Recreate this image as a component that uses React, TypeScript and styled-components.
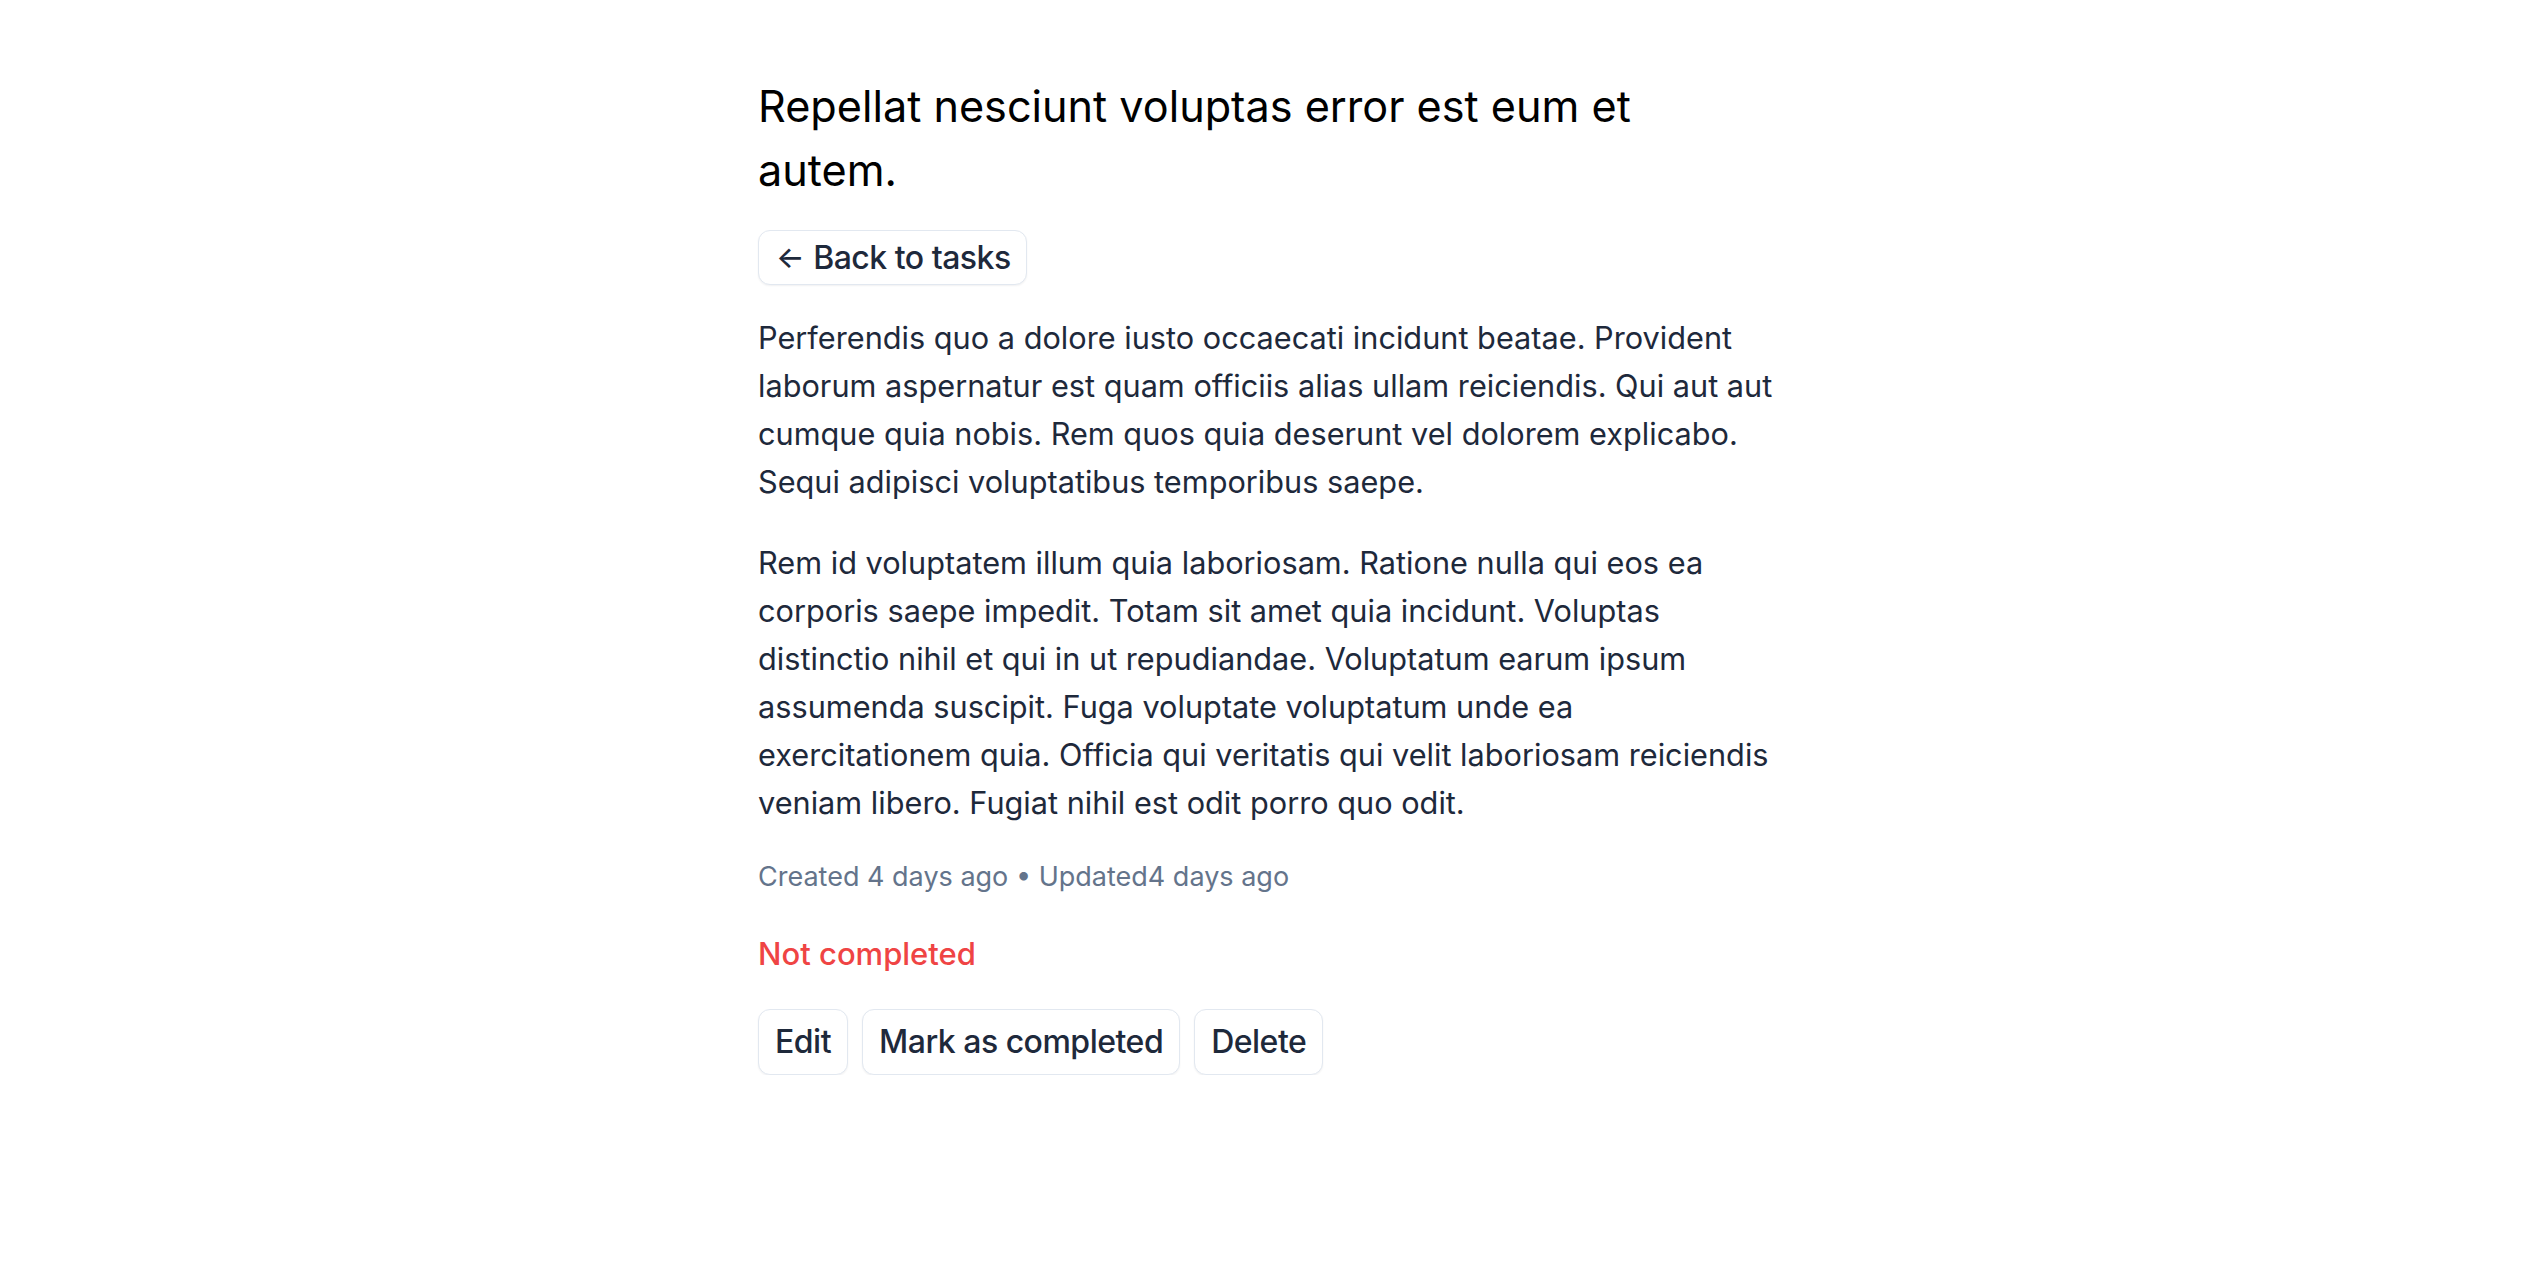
import React from "react";
import styled, { createGlobalStyle } from "styled-components";

const GlobalStyle = createGlobalStyle`
  html, body {
    margin: 0;
    padding: 0;
    background: #ffffff;
  }
  body {
    font-family: Inter, "Noto Sans", "Liberation Sans", sans-serif;
    -webkit-font-smoothing: antialiased;
  }
  * { box-sizing: border-box; }
`;

const Page = styled.main`
  width: 1032px;
  margin: 0 auto;
  padding: 74px 0 0 8px;
  display: flex;
  flex-direction: column;
  align-items: flex-start;
`;

const Title = styled.h1`
  margin: 0;
  font-size: 43.2px;
  line-height: 64px;
  font-weight: 400;
  color: #000000;
`;

const Button = styled.button<{ $compact?: boolean }>`
  display: inline-flex;
  align-items: center;
  gap: ${(p) => (p.$compact ? "9px" : "0")};
  margin: 0;
  padding: ${(p) => (p.$compact ? "3px 15px 3px 17px" : "8px 16px")};
  font-family: inherit;
  font-size: 32px;
  letter-spacing: -0.5px;
  line-height: ${(p) => (p.$compact ? "47px" : "48px")};
  font-weight: 500;
  color: #1e293b;
  background: #ffffff;
  border: 1px solid #e2e8f0;
  border-radius: 12px;
  box-shadow: 0 1px 2px rgba(15, 23, 42, 0.06);
  cursor: pointer;
`;

const BackRow = styled.div`
  margin-top: 28px;
`;

const Arrow = styled.span`
  font-size: 30px;
  font-weight: 500;
`;

const Body = styled.div`
  margin-top: 29px;
  display: flex;
  flex-direction: column;
  gap: 33px;
  width: 100%;
`;

const Paragraph = styled.p`
  margin: 0;
  font-size: 30.7px;
  line-height: 48px;
  color: #1e293b;
`;

const Meta = styled.p`
  margin: 30px 0 0;
  font-size: 27px;
  line-height: 40px;
  color: #64748b;
`;

const Status = styled.p<{ $done?: boolean }>`
  margin: 33px 0 0;
  font-size: 31px;
  line-height: 48px;
  font-weight: 500;
  color: ${(p) => (p.$done ? "#16a34a" : "#ef4444")};
`;

const Actions = styled.div`
  margin-top: 31px;
  display: flex;
  gap: 14px;
`;

export default function App() {
  return (
    <>
      <GlobalStyle />
      <Page>
        <Title>
          Repellat nesciunt voluptas error est eum et
          <br />
          autem.
        </Title>
        <BackRow>
          <Button $compact>
            <Arrow>←</Arrow>
            Back to tasks
          </Button>
        </BackRow>
        <Body>
          <Paragraph>
            Perferendis quo a dolore iusto occaecati incidunt beatae. Provident
            laborum aspernatur est quam officiis alias ullam reiciendis. Qui aut
            aut cumque quia nobis. Rem quos quia deserunt vel dolorem explicabo.
            Sequi adipisci voluptatibus temporibus saepe.
          </Paragraph>
          <Paragraph>
            Rem id voluptatem illum quia laboriosam. Ratione nulla qui eos ea
            corporis saepe impedit. Totam sit amet quia incidunt. Voluptas
            distinctio nihil et qui in ut repudiandae. Voluptatum earum ipsum
            assumenda suscipit. Fuga voluptate voluptatum unde ea
            exercitationem quia. Officia qui veritatis qui velit laboriosam
            reiciendis veniam libero. Fugiat nihil est odit porro quo odit.
          </Paragraph>
        </Body>
        <Meta>Created 4 days ago • Updated4 days ago</Meta>
        <Status>Not completed</Status>
        <Actions>
          <Button>Edit</Button>
          <Button>Mark as completed</Button>
          <Button>Delete</Button>
        </Actions>
      </Page>
    </>
  );
}
